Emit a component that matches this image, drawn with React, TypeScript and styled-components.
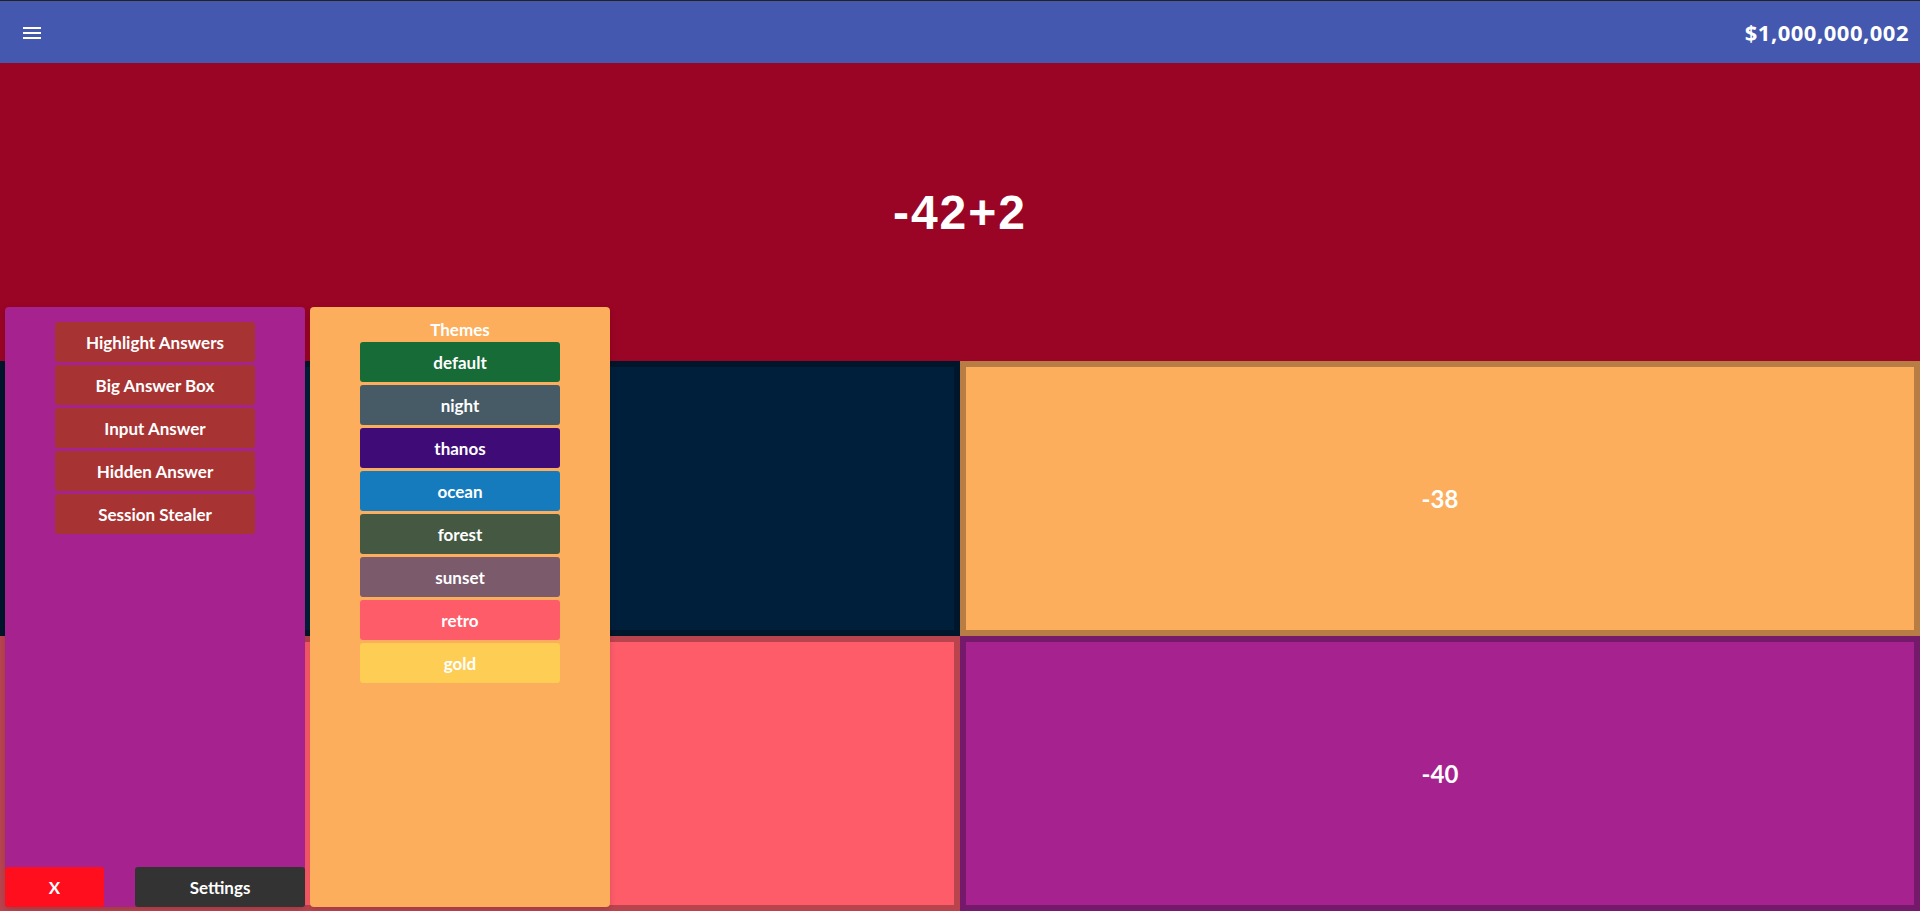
import styled, { createGlobalStyle } from "styled-components";

const GlobalStyle = createGlobalStyle`
  html, body {
    margin: 0;
    padding: 0;
    overflow: hidden;
    background: #222;
  }
  body {
    font-family: Lato, "Noto Sans", sans-serif;
  }
`;

const menuItems = [
  "Highlight Answers",
  "Big Answer Box",
  "Input Answer",
  "Hidden Answer",
  "Session Stealer",
];

const themes = [
  { name: "default", color: "#176b37" },
  { name: "night", color: "#475b66" },
  { name: "thanos", color: "#3f0b77" },
  { name: "ocean", color: "#157bbd" },
  { name: "forest", color: "#455842" },
  { name: "sunset", color: "#7a5a6b" },
  { name: "retro", color: "#ff5c6a" },
  { name: "gold", color: "#fecd54" },
];

// the two left answers sit under the open drawer, so their labels never show
const answers = [
  { text: "", fill: "#001f3b", edge: "#00162b" },
  { text: "-38", fill: "#fcae5c", edge: "#b87d44" },
  { text: "", fill: "#ff5c6a", edge: "#b9444e" },
  { text: "-40", fill: "#a6238f", edge: "#751a6a" },
];

const App: React.FC = () => {
  return (
    <Page>
      <GlobalStyle />
      <TopBar>
        <MenuIcon viewBox="0 0 24 24">
          <path
            fill="#fff"
            d="M3 18h18v-2H3v2zm0-5h18v-2H3v2zm0-5h18V6H3v2z"
          />
        </MenuIcon>
        <Money>$1,000,000,002</Money>
      </TopBar>
      <Question>-42+2</Question>
      <AnswerGrid>
        {answers.map((a, i) => (
          <Answer key={i} fill={a.fill} edge={a.edge}>
            {a.text}
          </Answer>
        ))}
      </AnswerGrid>

      <Drawer>
        <Panel background="#a6238f">
          <ButtonList>
            {menuItems.map((item) => (
              <PanelButton key={item} background="#a83333">
                {item}
              </PanelButton>
            ))}
          </ButtonList>
          <BottomRow>
            <CloseButton>X</CloseButton>
            <SettingsButton>Settings</SettingsButton>
          </BottomRow>
        </Panel>
        <Panel background="#fcae5c">
          <PanelTitle>Themes</PanelTitle>
          <ButtonList>
            {themes.map((t) => (
              <PanelButton key={t.name} background={t.color}>
                {t.name}
              </PanelButton>
            ))}
          </ButtonList>
        </Panel>
      </Drawer>
    </Page>
  );
};

export default App;

const Page = styled.div`
  position: relative;
  width: 1920px;
  height: 911px;
  display: flex;
  flex-direction: column;
  border-top: 1px solid #222;
  box-sizing: border-box;
  overflow: hidden;
`;

const TopBar = styled.header`
  height: 62px;
  flex-shrink: 0;
  background: #4358ae;
  display: flex;
  align-items: center;
  justify-content: space-between;
  padding: 0 11px 0 20px;
  box-sizing: border-box;
`;

const MenuIcon = styled.svg`
  width: 24px;
  height: 24px;
  margin-top: 2px;
`;

const Money = styled.div`
  color: #fff;
  font-family: "Noto Sans", Lato, sans-serif;
  font-weight: 700;
  font-size: 22px;
  letter-spacing: 0.5px;
`;

const Question = styled.div`
  height: 298px;
  flex-shrink: 0;
  background: #9b0525;
  color: #fff;
  display: flex;
  align-items: center;
  justify-content: center;
  font-family: "Liberation Sans", Arial, sans-serif;
  font-weight: 700;
  font-size: 48px;
  letter-spacing: 2px;
`;

const AnswerGrid = styled.div`
  flex: 1;
  display: grid;
  grid-template-columns: 1fr 1fr;
  grid-template-rows: 1fr 1fr;
`;

const Answer = styled.div<{ fill: string; edge: string }>`
  background: ${({ fill }) => fill};
  border: 6px solid ${({ edge }) => edge};
  display: flex;
  align-items: center;
  justify-content: center;
  color: #fff;
  font-weight: 700;
  font-size: 24px;
`;

const Drawer = styled.div`
  position: absolute;
  top: 306px;
  left: 5px;
  display: flex;
  gap: 5px;
  height: 600px;
`;

const Panel = styled.div<{ background: string }>`
  width: 300px;
  height: 100%;
  background: ${({ background }) => background};
  border-radius: 4px;
  box-shadow: 0 2px 6px rgba(0, 0, 0, 0.15);
  display: flex;
  flex-direction: column;
  align-items: center;
  padding-top: 15px;
  box-sizing: border-box;
`;

const PanelTitle = styled.div`
  color: #fff;
  font-weight: 700;
  font-size: 17px;
  line-height: 20px;
  margin-top: -2px;
  margin-bottom: 2px;
`;

const ButtonList = styled.div`
  display: flex;
  flex-direction: column;
  gap: 3px;
`;

const PanelButton = styled.div<{ background: string }>`
  width: 200px;
  height: 40px;
  background: ${({ background }) => background};
  border-radius: 3px;
  color: #fff;
  font-weight: 700;
  font-size: 17px;
  display: flex;
  align-items: center;
  justify-content: center;
  cursor: pointer;
`;

const BottomRow = styled.div`
  margin-top: auto;
  width: 100%;
  display: flex;
  justify-content: space-between;
`;

const BottomButton = styled.div`
  height: 40px;
  border-radius: 3px;
  color: #fff;
  font-weight: 700;
  font-size: 17px;
  display: flex;
  align-items: center;
  justify-content: center;
  cursor: pointer;
`;

const CloseButton = styled(BottomButton)`
  width: 99px;
  background: #ff0e1d;
`;

const SettingsButton = styled(BottomButton)`
  width: 170px;
  background: #333;
`;
